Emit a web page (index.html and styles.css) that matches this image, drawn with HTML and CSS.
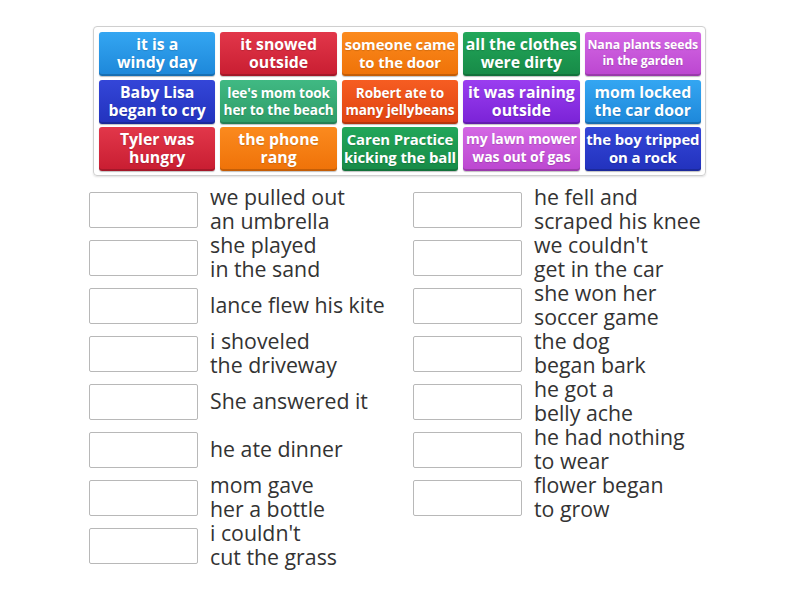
FILE: index.html
```html
<!DOCTYPE html>
<html>
<head>
<meta charset="utf-8">
<link rel="stylesheet" href="styles.css">
</head>
<body>
<div class="page">
  <div class="bank">
    <div class="tile c-lblue">it is a<br>windy day</div>
    <div class="tile c-red">it snowed<br>outside</div>
    <div class="tile c-orange f15">someone came<br>to the door</div>
    <div class="tile c-green">all the clothes<br>were dirty</div>
    <div class="tile c-magenta f12">Nana plants seeds<br>in the garden</div>

    <div class="tile c-dblue">Baby Lisa<br>began to cry</div>
    <div class="tile c-teal f13">lee's mom took<br>her to the beach</div>
    <div class="tile c-redorange f13">Robert ate to<br>many jellybeans</div>
    <div class="tile c-violet">it was raining<br>outside</div>
    <div class="tile c-lblue">mom locked<br>the car door</div>

    <div class="tile c-red">Tyler was<br>hungry</div>
    <div class="tile c-orange">the phone<br>rang</div>
    <div class="tile c-green f15">Caren Practice<br>kicking the ball</div>
    <div class="tile c-magenta f14">my lawn mower<br>was out of gas</div>
    <div class="tile c-dblue f15">the boy tripped<br>on a rock</div>
  </div>

  <div class="columns">
    <div class="col">
      <div class="row"><div class="slot"></div><div class="txt">we pulled out<br>an umbrella</div></div>
      <div class="row"><div class="slot"></div><div class="txt">she played<br>in the sand</div></div>
      <div class="row"><div class="slot"></div><div class="txt">lance flew his kite</div></div>
      <div class="row"><div class="slot"></div><div class="txt">i shoveled<br>the driveway</div></div>
      <div class="row"><div class="slot"></div><div class="txt">She answered it</div></div>
      <div class="row"><div class="slot"></div><div class="txt">he ate dinner</div></div>
      <div class="row"><div class="slot"></div><div class="txt">mom gave<br>her a bottle</div></div>
      <div class="row"><div class="slot"></div><div class="txt">i couldn't<br>cut the grass</div></div>
    </div>
    <div class="col">
      <div class="row"><div class="slot"></div><div class="txt">he fell and<br>scraped his knee</div></div>
      <div class="row"><div class="slot"></div><div class="txt">we couldn't<br>get in the car</div></div>
      <div class="row"><div class="slot"></div><div class="txt">she won her<br>soccer game</div></div>
      <div class="row"><div class="slot"></div><div class="txt">the dog<br>began bark</div></div>
      <div class="row"><div class="slot"></div><div class="txt">he got a<br>belly ache</div></div>
      <div class="row"><div class="slot"></div><div class="txt">he had nothing<br>to wear</div></div>
      <div class="row"><div class="slot"></div><div class="txt">flower began<br>to grow</div></div>
    </div>
  </div>
</div>
</body>
</html>
```

FILE: styles.css
```css
html, body {
  margin: 0;
  padding: 0;
  background: #ffffff;
}

body {
  font-family: "Open Sans", "Noto Sans", sans-serif;
  color: #333333;
}

.page {
  width: 800px;
  height: 600px;
  padding-top: 26px;
  box-sizing: border-box;
}

.bank {
  margin-left: 93px;
  width: 613px;
  box-sizing: border-box;
  border: 1px solid #cfcfcf;
  border-radius: 4px;
  box-shadow: 0 1px 2px rgba(0,0,0,0.12);
  padding: 5px 4px 4px 5px;
  display: grid;
  grid-template-columns: repeat(5, 1fr);
  grid-auto-rows: 44px;
  column-gap: 5px;
  row-gap: 3.5px;
}

.tile {
  border-radius: 3px;
  color: #ffffff;
  font-weight: 700;
  font-size: 15.8px;
  line-height: 18px;
  text-align: center;
  display: flex;
  align-items: center;
  justify-content: center;
  white-space: nowrap;
  box-shadow: inset 0 -2px 0 rgba(0,0,0,0.18), 0 1px 1px rgba(0,0,0,0.25);
  text-shadow: 0 1px 1px rgba(0,0,0,0.15);
  padding-bottom: 2px;
  box-sizing: border-box;
}

.f15 { font-size: 14.9px; letter-spacing: -0.1px; }
.f14 { font-size: 14px; letter-spacing: -0.1px; }
.f13 { font-size: 13.6px; line-height: 17px; letter-spacing: -0.1px; }
.f12 { font-size: 12.3px; line-height: 16px; letter-spacing: -0.1px; }

.c-lblue    { background: linear-gradient(#34a6f2, #1d87d9); }
.c-red      { background: linear-gradient(#e2374a, #c81d31); }
.c-orange   { background: linear-gradient(#fb8a1e, #ef7208); }
.c-green    { background: linear-gradient(#22a75a, #178a47); }
.c-magenta  { background: linear-gradient(#d468e4, #bb46d0); }
.c-dblue    { background: linear-gradient(#3446d8, #2232bd); }
.c-teal     { background: linear-gradient(#40b983, #2e9c68); }
.c-redorange{ background: linear-gradient(#f65d22, #df430f); }
.c-violet   { background: linear-gradient(#9a3ef0, #7a22d6); }

.columns {
  display: flex;
  margin-top: 10px;
  margin-left: 89px;
}

.col {
  width: 324px;
  display: flex;
  flex-direction: column;
}

.row {
  height: 48px;
  display: flex;
  align-items: center;
  gap: 12px;
}

.slot {
  width: 109px;
  height: 36px;
  box-sizing: border-box;
  border: 1px solid #b8b8b8;
  border-radius: 2px;
  background: #ffffff;
  flex: none;
}

.txt {
  font-size: 21.3px;
  line-height: 24px;
  color: #333333;
  white-space: nowrap;
  margin-top: -2px;
}
```
